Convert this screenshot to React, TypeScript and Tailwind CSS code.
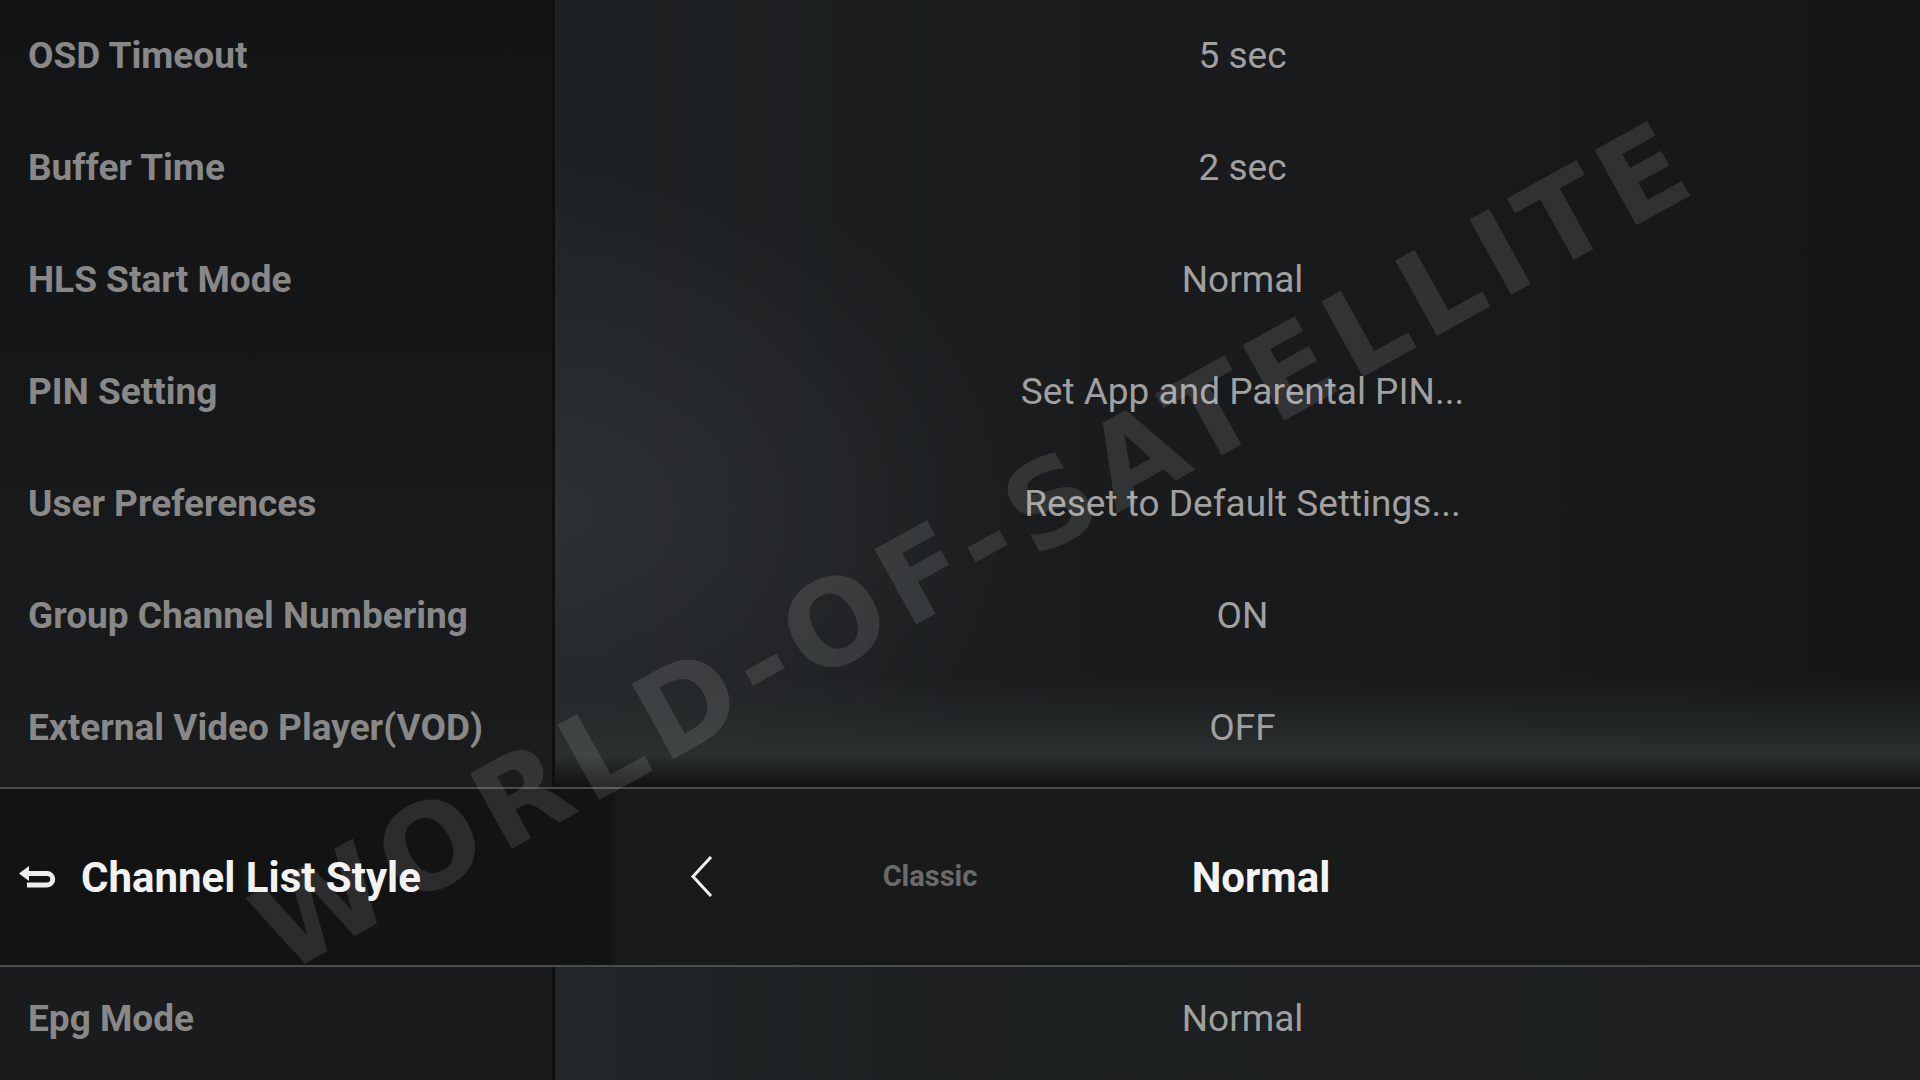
import React from "react";

const rows: [string, string][] = [
  ["OSD Timeout", "5 sec"],
  ["Buffer Time", "2 sec"],
  ["HLS Start Mode", "Normal"],
  ["PIN Setting", "Set App and Parental PIN..."],
  ["User Preferences", "Reset to Default Settings..."],
  ["Group Channel Numbering", "ON"],
  ["External Video Player(VOD)", "OFF"],
];

function BackIcon() {
  return (
    <svg width="37" height="24" viewBox="0 0 37 24" className="ml-[19px] shrink-0">
      <polygon points="0,8.5 10,1 10,16" fill="#ededed" />
      <path d="M8 8.5 H28 A5.75 5.75 0 0 1 28 20 H8" fill="none" stroke="#ededed" strokeWidth="5" />
    </svg>
  );
}

function Chevron() {
  return (
    <svg width="24" height="42" viewBox="0 0 24 42" className="ml-[75px] shrink-0">
      <path d="M21 1 L3 20.5 L21 40" fill="none" stroke="#f0f0f0" strokeWidth="3" />
    </svg>
  );
}

export default function App() {
  return (
    <div className="relative w-[1920px] h-[1080px] overflow-hidden bg-[#151718] font-['Roboto',sans-serif]">
      <div className="flex flex-col h-full">
        {/* upper list */}
        <div className="flex h-[787px]">
          <div className="w-[552px] flex flex-col bg-[linear-gradient(180deg,#131415_0%,#161718_50%,#1b1c1d_100%)]">
            {rows.map(([l]) => (
              <div key={l} className="h-[112px] flex items-center pl-[28px] text-[37px] font-bold text-[#888888] whitespace-nowrap">
                {l}
              </div>
            ))}
          </div>
          <div className="w-[3px] bg-[#0e0f0f]" />
          <div className="flex-1 flex flex-col pl-[10px] bg-[linear-gradient(180deg,transparent_0%,transparent_86%,#2a2f2f_96%,#101111_100%),radial-gradient(ellipse_35%_45%_at_0%_65%,#2e3133_0%,transparent_100%),linear-gradient(90deg,#1e2123_0%,#191b1c_40%,#141617_100%)]">
            {rows.map(([l, v]) => (
              <div key={l} className="h-[112px] flex items-center justify-center text-[37px] text-[#a0a0a0] whitespace-nowrap">
                {v}
              </div>
            ))}
          </div>
        </div>

        <div className="h-[2px] bg-[#4a4b4b]" />

        {/* focused row */}
        <div className="flex h-[176px]">
          <div className="w-[615px] bg-[#131313] flex items-center">
            <BackIcon />
            <span className="ml-[25px] text-[42px] font-bold text-[#f2f2f2] whitespace-nowrap">Channel List Style</span>
          </div>
          <div className="flex-1 bg-[#191a1a] flex items-center">
            <Chevron />
            <div className="ml-[116px] w-[200px] flex justify-center text-[29px] font-bold text-[#6b6b6b]">Classic</div>
            <div className="ml-[131px] w-[200px] flex justify-center text-[42px] font-bold text-[#f4f4f4]">Normal</div>
          </div>
        </div>

        <div className="h-[2px] bg-[#4a4b4b]" />

        {/* lower row */}
        <div className="flex flex-1">
          <div className="w-[552px] bg-[#1a1b1c] flex items-start">
            <div className="h-[104px] flex items-center pl-[28px] text-[37px] font-bold text-[#888888]">Epg Mode</div>
          </div>
          <div className="w-[3px] bg-[#0e0f0f]" />
          <div className="flex-1 pl-[10px] bg-[linear-gradient(90deg,#232628_0%,#1e2122_25%,#1c1e1f_100%)] flex items-start justify-center">
            <div className="h-[104px] flex items-center text-[37px] text-[#a0a0a0]">Normal</div>
          </div>
        </div>
      </div>

      {/* watermark */}
      <div className="pointer-events-none absolute left-[975px] top-[545px] -translate-x-1/2 -translate-y-1/2 rotate-[-29deg] whitespace-nowrap font-['DejaVu_Sans',sans-serif] font-bold text-[118px] leading-none tracking-[0.08em] text-white/[0.11]">
        WORLD-OF-SATELLITE
      </div>
    </div>
  );
}
